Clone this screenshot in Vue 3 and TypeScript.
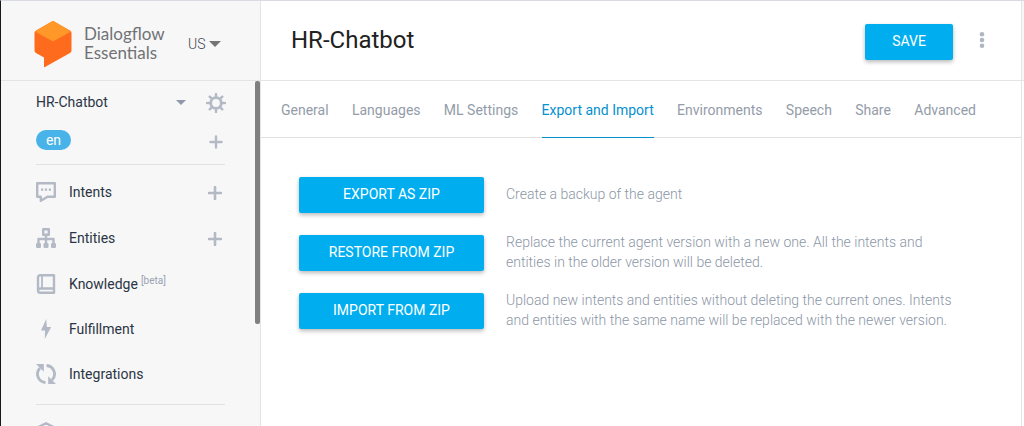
<script setup lang="ts">
import { ref } from 'vue'

interface NavItem {
  icon: string
  label: string
  tag?: string
  addable?: boolean
}

interface Action {
  label: string
  text: string
}

const navItems: NavItem[] = [
  { icon: 'intents', label: 'Intents', addable: true },
  { icon: 'entities', label: 'Entities', addable: true },
  { icon: 'knowledge', label: 'Knowledge', tag: '[beta]' },
  { icon: 'fulfillment', label: 'Fulfillment' },
  { icon: 'integrations', label: 'Integrations' },
]

const tabs: string[] = [
  'General',
  'Languages',
  'ML Settings',
  'Export and Import',
  'Environments',
  'Speech',
  'Share',
  'Advanced',
]
const activeTab = ref('Export and Import')

const actions: Action[] = [
  { label: 'EXPORT AS ZIP', text: 'Create a backup of the agent' },
  {
    label: 'RESTORE FROM ZIP',
    text: 'Replace the current agent version with a new one. All the intents and entities in the older version will be deleted.',
  },
  {
    label: 'IMPORT FROM ZIP',
    text: 'Upload new intents and entities without deleting the current ones. Intents and entities with the same name will be replaced with the newer version.',
  },
]
</script>

<template>
  <div class="shell">
    <aside class="sidebar">
      <div class="brand">
        <svg class="brand-mark" viewBox="0 0 38 48" aria-hidden="true">
          <path d="M19 1 L36 10.500 Q37.500 11.300 37.500 13 V30.500 Q37.500 32 36 33 L11 47 Q10 47.500 10 46.500 V37.500 L2 33 Q.5 32 .5 30.500 V13 Q.5 11.300 2 10.500 Z" fill="#ff6b1c" />
          <path d="M17.500 1.500 Q19 .7 20.500 1.500 L37 11.500 L19 21.500 L1 11.500 Z" fill="#ff9829" />
        </svg>
        <div class="brand-name">Dialogflow<br />Essentials</div>
        <button class="region" type="button">
          US
          <svg viewBox="0 0 12 6" width="12" height="6" aria-hidden="true"><path d="M0 0h12L6 6z" fill="#757575" /></svg>
        </button>
      </div>

      <div class="side-body">
        <div class="agent-row">
          <button class="agent" type="button">
            <span>HR-Chatbot</span>
            <svg viewBox="0 0 10 5" width="10" height="5" aria-hidden="true"><path d="M0 0h10L5 5z" fill="#8f99aa" /></svg>
          </button>
          <button class="icon-btn" type="button" aria-label="Settings">
            <svg viewBox="0 0 20 20" width="20" height="20" fill="none" stroke="#b3bac6" aria-hidden="true">
              <circle cx="10" cy="10" r="5.300" stroke-width="2.800" />
              <path d="M10 1v3M10 16v3M1 10h3M16 10h3M3.700 3.700l2 2M14.300 14.300l2 2M3.700 16.300l2-2M14.300 5.700l2-2" stroke-width="2.400" stroke-linecap="round" />
            </svg>
          </button>
        </div>
        <div class="lang-row">
          <button class="lang" type="button">en</button>
          <button class="icon-btn" type="button" aria-label="Add language">
            <svg viewBox="0 0 14 14" width="14" height="14" aria-hidden="true"><path d="M7 1.500v11M1.500 7h11" stroke="#b3bac6" stroke-width="2.400" stroke-linecap="round" /></svg>
          </button>
        </div>

        <nav class="nav">
          <div v-for="item in navItems" :key="item.label" class="nav-row">
            <a class="nav-link" href="#">
              <svg class="nav-icon" viewBox="0 0 20 20" aria-hidden="true">
                <g v-if="item.icon === 'intents'">
                  <path d="M1.200 1.200h17.600v13.600H11.500L4.800 18.800v-4H1.200z" fill="none" stroke="#b3bac6" stroke-width="2.400" stroke-linejoin="round" />
                  <path d="M5 6.500h2.200v2.200H5zM8.900 6.500h2.200v2.200H8.900zM12.800 6.500H15v2.200h-2.200z" fill="#b3bac6" />
                </g>
                <g v-else-if="item.icon === 'entities'">
                  <path d="M7.200 1.200h5.600v5.600H7.200zM10 7v10M2.500 16v-5h15v5" fill="none" stroke="#b3bac6" stroke-width="2.400" stroke-linejoin="round" />
                  <rect x="0" y="15" width="5" height="5" rx="1.200" fill="#b3bac6" />
                  <rect x="7.500" y="15" width="5" height="5" rx="1.200" fill="#b3bac6" />
                  <rect x="15" y="15" width="5" height="5" rx="1.200" fill="#b3bac6" />
                </g>
                <g v-else-if="item.icon === 'knowledge'" fill="none" stroke="#b3bac6" stroke-width="2.400">
                  <path d="M18 14.500V1.200H4.500Q2 1.200 2 3.500V16.500Q2 18.800 4.500 18.800H18V14.500H4.500Q2 14.500 2 17" stroke-linejoin="round" />
                  <path d="M6 1v13" stroke-width="1.800" />
                </g>
                <path v-else-if="item.icon === 'fulfillment'" d="M10.200 0L5 11.500h4L8.800 20 15.200 8h-4.400z" fill="#b3bac6" />
                <g v-else>
                  <path d="M9.500 18.500A8.500 8.500 0 0 1 4 4M10.500 1.500A8.500 8.500 0 0 1 16 16" fill="none" stroke="#b3bac6" stroke-width="2.800" />
                  <path d="M0 0h7.800v7.800zM20 20h-7.800v-7.800z" fill="#b3bac6" />
                </g>
              </svg>
              <span>{{ item.label }}</span>
              <span v-if="item.tag" class="tag">{{ item.tag }}</span>
            </a>
            <button v-if="item.addable" class="icon-btn" type="button" :aria-label="`Add ${item.label}`">
              <svg viewBox="0 0 14 14" width="14" height="14" aria-hidden="true"><path d="M7 1v12M1 7h12" stroke="#b3bac6" stroke-width="2.600" stroke-linecap="round" /></svg>
            </button>
          </div>
        </nav>

        <div class="nav">
          <div class="nav-row">
            <svg class="nav-icon" viewBox="0 0 20 20" aria-hidden="true">
              <path d="M10 1.200L18.500 5.500V14.500L10 18.800 1.500 14.500V5.500z" fill="none" stroke="#b3bac6" stroke-width="2.400" stroke-linejoin="round" />
            </svg>
          </div>
        </div>
        <div class="scroll-thumb"></div>
      </div>
    </aside>

    <main class="content">
      <header class="header">
        <h1>HR-Chatbot</h1>
        <button class="primary save" type="button">SAVE</button>
        <button class="more" type="button" aria-label="More options">
          <svg viewBox="0 0 6 18" width="6" height="18" fill="#b0b6c3" aria-hidden="true">
            <circle cx="3" cy="3.200" r="2.300" /><circle cx="3" cy="9" r="2.300" /><circle cx="3" cy="14.800" r="2.300" />
          </svg>
        </button>
      </header>

      <div class="tabs" role="tablist">
        <button
          v-for="tab in tabs"
          :key="tab"
          class="tab"
          :class="{ active: tab === activeTab }"
          type="button"
          role="tab"
          :aria-selected="tab === activeTab"
          @click="activeTab = tab"
        >{{ tab }}</button>
      </div>

      <section class="actions">
        <div v-for="action in actions" :key="action.label" class="action">
          <button class="primary" type="button">{{ action.label }}</button>
          <p>{{ action.text }}</p>
        </div>
      </section>
    </main>
    <div class="rail"><div class="rail-head"></div></div>
  </div>
</template>

<style>
body {
  margin: 0;
  background: #fff;
}
</style>

<style scoped>
.shell {
  box-sizing: border-box;
  display: flex;
  height: 100vh;
  overflow: hidden;
  border-top: 1px solid #d8dbe2;
  border-left: 1px solid #17181c;
  background: #fff;
  font-family: Roboto, "Liberation Sans", sans-serif;
  font-size: 14px;
  line-height: 20px;
  color: #2b3544;
}

button {
  padding: 0;
  border: 0;
  background: none;
  font: inherit;
  color: inherit;
  cursor: pointer;
}

svg {
  display: block;
  flex: none;
}

.sidebar {
  flex: none;
  display: flex;
  flex-direction: column;
  width: 259px;
  border-right: 1px solid #e4e4e4;
  background: #f7f7f7;
}

.brand {
  box-sizing: border-box;
  display: flex;
  align-items: center;
  height: 80px;
  padding: 6px 0 0 33px;
  border-bottom: 1px solid #e4e4e4;
}

.brand-mark {
  width: 38px;
  height: 48px;
}

.brand-name {
  flex: none;
  width: 116px;
  padding: 0 0 2px 12px;
  box-sizing: border-box;
  font-family: Lato, Roboto, sans-serif;
  font-size: 17px;
  line-height: 19px;
  color: #707276;
}

.region {
  display: flex;
  align-items: center;
  gap: 3px;
  font-weight: 300;
  color: #3c4250;
}

.side-body {
  position: relative;
  flex: 1;
  min-height: 0;
  overflow: hidden;
}

.agent-row,
.lang-row {
  display: flex;
  justify-content: space-between;
  padding: 0 34px 0 35px;
}

.agent-row {
  align-items: center;
  height: 43px;
}

.agent {
  display: flex;
  flex: 1;
  align-items: center;
  justify-content: space-between;
  margin-right: 20px;
}

.agent span {
  padding-bottom: 2px;
}

.lang-row {
  align-items: flex-end;
  height: 28px;
  padding-bottom: 12px;
}

.lang {
  width: 35px;
  height: 20px;
  margin-bottom: 2px;
  border-radius: 10px;
  background: #47b3e8;
  color: #fff;
}

.icon-btn {
  display: flex;
  align-items: center;
  justify-content: center;
  width: 20px;
  height: 20px;
}

.nav {
  margin: 0 35px;
  padding: 4px 0 8px;
  border-top: 1px solid #e1e2e4;
}

.nav-row {
  display: flex;
  align-items: center;
  justify-content: space-between;
  height: 46px;
}

.nav-row .icon-btn {
  padding-top: 2px;
}

.nav-row:nth-child(n + 3) {
  height: 45px;
}

.nav-link {
  display: flex;
  align-items: center;
  color: inherit;
  text-decoration: none;
}

.nav-icon {
  width: 20px;
  height: 20px;
  margin-right: 13px;
}

.tag {
  padding: 0 0 6px 3px;
  font-size: 10px;
  line-height: 14px;
  color: #98a2b3;
}

.scroll-thumb {
  position: absolute;
  top: 0;
  right: 0;
  width: 5px;
  height: 243px;
  border-radius: 2px;
  background: #808080;
}

.content {
  flex: 1;
  min-width: 0;
}

.header {
  box-sizing: border-box;
  display: flex;
  align-items: center;
  height: 80px;
  padding: 0 36px 0 30px;
  border-bottom: 1px solid #e4e4e4;
}

h1 {
  flex: 1;
  margin: 0;
  padding-bottom: 2px;
  font-size: 24px;
  line-height: 32px;
  font-weight: 400;
  color: #212121;
}

.primary {
  flex: none;
  width: 185px;
  height: 36px;
  padding-bottom: 2px;
  border-radius: 2px;
  background: #00aef0;
  box-shadow: 0 2px 4px rgba(0, 0, 0, 0.28);
  color: #fff;
}

.save {
  width: 88px;
  margin: 3px 26px 0 0;
}

.more {
  padding-bottom: 2px;
}

.tabs {
  display: flex;
  justify-content: space-between;
  box-sizing: border-box;
  height: 57px;
  padding: 0 45px 0 20px;
  border-bottom: 1px solid #e0e0e0;
}

.tab {
  flex: none;
  height: 57px;
  padding: 2px 0 0;
  box-sizing: border-box;
  border-bottom: 1px solid transparent;
  color: #949ca9;
  white-space: nowrap;
}

.tab.active {
  border-bottom-color: #0590d0;
  color: #0590d0;
}

.actions {
  display: flex;
  flex-direction: column;
  gap: 16px;
  padding: 36px 0 0 38px;
}

.action {
  display: flex;
  align-items: center;
  gap: 22px;
  min-height: 42px;
}

.action p {
  max-width: 460px;
  margin: 0;
  padding-bottom: 2px;
  font-weight: 300;
  color: #8c96a6;
}

.rail {
  flex: none;
  width: 2px;
  border-left: 1px solid #e4e4e4;
}

.rail-head {
  box-sizing: border-box;
  height: 80px;
  border-bottom: 1px solid #e4e4e4;
  background: #f7f7f7;
}
</style>
